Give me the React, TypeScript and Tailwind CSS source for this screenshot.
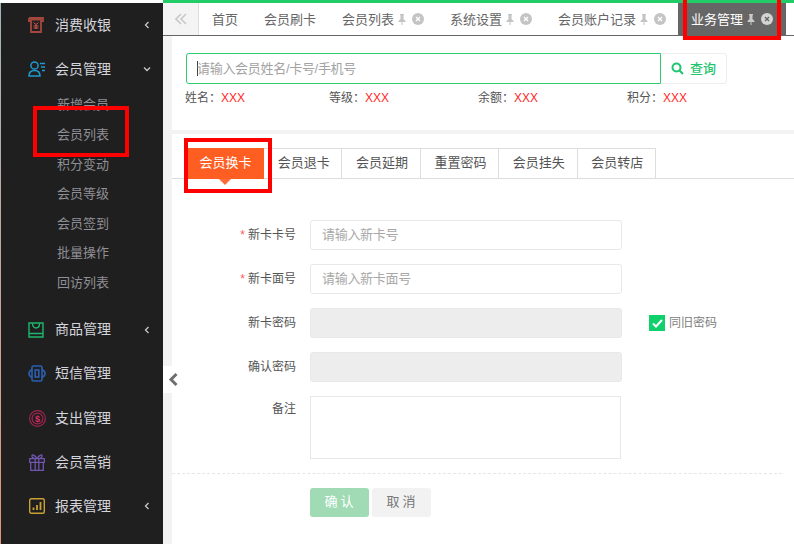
import React from "react";

const zh = "font-['Liberation_Sans','Noto_Sans_CJK_SC',sans-serif]";

type MenuItem = { label: string; icon: React.ReactNode; arrow?: boolean };

const IconCash = () => (
  <svg width="16" height="16" viewBox="0 0 16 16" fill="none" stroke="#a5473f" strokeWidth="1.8">
    <path d="M1 1h14v3h-2M1 1v3h2" />
    <path d="M3 2.500h10v12.500H3z" />
    <path d="M5.500 5.500L8 7.500l2.500-2M8 7.500V12M5.500 9h5M5.500 11h5" stroke="#d2564a" strokeWidth="1" />
  </svg>
);

const IconMember = () => (
  <svg width="18" height="16" viewBox="0 0 18 16" fill="none" stroke="#1f9bd1" strokeWidth="1.5">
    <circle cx="6.500" cy="4.500" r="3.600" />
    <path d="M1 15c0-3.500 2.400-5.500 5.500-5.500S12 11.500 12 15z" />
    <path d="M12 2.500h5M13 6h4M14 9.500h3" />
  </svg>
);

const IconGoods = () => (
  <svg width="16" height="16" viewBox="0 0 16 16" fill="none" stroke="#1fb76c" strokeWidth="1.4">
    <path d="M1 1h14v14H1zM1 11.500h14" />
    <path d="M4.500 1.500c0 6 7 6 7 0" />
  </svg>
);

const IconSms = () => (
  <svg width="18" height="17" viewBox="0 0 18 17" fill="none" stroke="#2a5fb0" strokeWidth="1.6">
    <rect x="4" y="1" width="10" height="15" rx="1.500" />
    <rect x="7.200" y="5" width="3.600" height="7" />
    <path d="M4 4.500c-4 2-4 6 0 8M14 4.500c4 2 4 6 0 8" />
  </svg>
);

const IconExpense = () => (
  <svg width="17" height="17" viewBox="0 0 17 17" fill="none" stroke="#a02450" strokeWidth="1.200" className="ml-px">
    <circle cx="8.500" cy="8.500" r="7.900" />
    <circle cx="8.500" cy="8.500" r="5.400" />
    <text x="8.500" y="11.500" textAnchor="middle" fontSize="9" fontWeight="700" fill="#e02a66" stroke="none">$</text>
  </svg>
);

const IconGift = () => (
  <svg width="16" height="17" viewBox="0 0 16 17" fill="none" stroke="#6f55ad" strokeWidth="1.300" className="ml-px">
    <path d="M.7 4.700h14.600v3.600H.7zM1.700 8.300v8h12.600v-8M6.200 4.700v11.600M9.800 4.700v11.600" />
    <path d="M8 4.500C6 1.500 3.500 .2 3 1.500S4 4.500 5.500 4.500M8 4.500c2-3 4.500-4.300 5-3s-1 3-2.500 3" />
  </svg>
);

const IconReport = () => (
  <svg width="16" height="16" viewBox="0 0 16 16" fill="none" stroke="#c9a032" strokeWidth="1.400" className="ml-px">
    <rect x="0.700" y="0.700" width="14.600" height="14.600" rx="1.500" />
    <path d="M4.500 12v-2.500M8 12V7M11.500 12V4" strokeWidth="1.800" />
  </svg>
);

const Chevron = ({ down }: { down?: boolean }) => (
  <svg width="8" height="8" viewBox="0 0 8 8" fill="none" stroke="#c8c8c8" strokeWidth="1.300" className={down ? "rotate-[-90deg]" : ""}>
    <path d="M5.500 1L2.500 4l3 3" />
  </svg>
);

const Pin = ({ color = "#c4c4c4" }: { color?: string }) => (
  <svg width="8" height="11" viewBox="0 0 8 11" fill={color}>
    <path d="M2 0h4v1l-.5.5V5L7.500 7v1H4.500v3h-1V8H.5V7l2-2V1.500L2 1z" />
  </svg>
);

const CloseDot = ({ bg = "#c4c4c4", fg = "#ffffff" }: { bg?: string; fg?: string }) => (
  <svg width="12" height="12" viewBox="0 0 12 12">
    <circle cx="6" cy="6" r="6" fill={bg} />
    <path d="M4 4l4 4M8 4l-4 4" stroke={fg} strokeWidth="1.400" />
  </svg>
);

const topMenus: MenuItem[] = [
  { label: "商品管理", icon: <IconGoods />, arrow: true },
  { label: "短信管理", icon: <IconSms /> },
  { label: "支出管理", icon: <IconExpense /> },
  { label: "会员营销", icon: <IconGift /> },
  { label: "报表管理", icon: <IconReport />, arrow: true },
];

const subMenus = ["新增会员", "会员列表", "积分变动", "会员等级", "会员签到", "批量操作", "回访列表"];

const MenuRow = ({ label, icon, arrow, down }: MenuItem & { down?: boolean }) => (
  <div className="h-[44.2px] flex items-center text-[14px] text-[#d4d4dc] relative">
    <div className="w-[54px] pl-[27px] flex-none flex items-center">{icon}</div>
    <span>{label}</span>
    {arrow && (
      <span className="absolute left-[142px] top-[18px]">
        <Chevron down={down} />
      </span>
    )}
  </div>
);

const Sidebar = () => (
  <div className="w-[163px] h-full flex-none flex flex-col pt-[3px] bg-white">
    <div className="flex-1 bg-gradient-to-b from-[#9fb4ba] to-[#e2937a] pl-px">
      <div className="h-full bg-[#1f1f1f]">
        <MenuRow label="消费收银" icon={<IconCash />} arrow />
        <MenuRow label="会员管理" icon={<IconMember />} arrow down />
        <div className="flex flex-col -mt-[1px] pb-[10px]">
          {subMenus.map((s) => (
            <div key={s} className="h-[29.6px] flex items-center pl-[56px] text-[13px] text-[#8f8f96]">
              {s}
            </div>
          ))}
        </div>
        {topMenus.map((m) => (
          <MenuRow key={m.label} {...m} />
        ))}
      </div>
    </div>
  </div>
);

const Tab = ({ label, closable, active }: { label: string; closable?: boolean; active?: boolean }) => (
  <div className={`h-full px-[13px] flex items-center text-[13px] flex-none ${active ? "-ml-px bg-[#666666] text-white" : "text-[#666666]"}`}>
    <span className="pt-px">{label}</span>
    {closable && (
      <span className="flex items-center gap-[6px] ml-[4px] w-[26px]">
        <Pin color={active ? "#c9c9c9" : "#c4c4c4"} />
        <CloseDot bg={active ? "#d4d4d4" : "#c4c4c4"} fg={active ? "#666666" : "#ffffff"} />
      </span>
    )}
  </div>
);

const TabBar = () => (
  <div className="h-[33px] flex-none flex border-b border-b-[#666666] bg-white overflow-hidden">
    <div className="w-[36px] flex-none bg-[#f4f4f4] border-r border-r-[#dddddd] flex items-center justify-center">
      <svg width="12" height="12" viewBox="0 0 12 12" fill="none" stroke="#c8c8c8" strokeWidth="1.600">
        <path d="M6 1L1 6l5 5M11 1L6 6l5 5" />
      </svg>
    </div>
    <Tab label="首页" />
    <Tab label="会员刷卡" />
    <Tab label="会员列表" closable />
    <Tab label="系统设置" closable />
    <Tab label="会员账户记录" closable />
    <Tab label="业务管理" closable active />
  </div>
);

const SearchBar = () => (
  <div className="flex h-[31px]">
    <div className="w-[475px] flex items-center pl-[10px] border border-[#2fca72] rounded-l-[3px] text-[13px] tracking-[-0.3px] text-[#a3a3a3]">
      <span className="w-px h-[15px] bg-[#444444] -mr-px" />
      请输入会员姓名/卡号/手机号
    </div>
    <div className="w-[66px] flex items-center justify-center gap-[6px] border border-l-0 border-[#eeeeee] rounded-r-[3px] text-[13px] font-medium text-[#1fc46f]">
      <svg width="13" height="13" viewBox="0 0 13 13" fill="none" stroke="#1fc46f" strokeWidth="2">
        <circle cx="5.500" cy="5.500" r="4" />
        <path d="M8.500 8.500L12 12" />
      </svg>
      查询
    </div>
  </div>
);

const infos = ["姓名：", "等级：", "余额：", "积分："];

const InfoRow = () => (
  <div className="flex mt-[6px] -ml-px text-[12px] leading-[16px] text-[#555555]">
    {infos.map((i) => (
      <div key={i} className="w-[149px] first:w-[144px]">
        {i}
        <span className="text-[#ff2a2a]">XXX</span>
      </div>
    ))}
  </div>
);

const subTabs = ["会员退卡", "会员延期", "重置密码", "会员挂失", "会员转店"];

const BizTabs = () => (
  <div className="h-[37px] flex pl-[15px] relative">
    <div className="absolute left-0 right-0 top-[30px] h-px bg-[#dddddd]" />
    <div className="w-[77px] h-[31px] pb-[2px] bg-[#ff5e23] text-white text-[13px] flex items-center justify-center relative flex-none">
      会员换卡
      <span className="absolute left-[32px] top-[31px] w-0 h-0 border-x-[6px] border-x-transparent border-t-[6px] border-t-[#ff6b35]" />
    </div>
    {subTabs.map((t) => (
      <div key={t} className="w-[78.4px] h-[31px] pb-[2px] pl-[2px] flex-none border border-l-0 border-[#dddddd] text-[13px] text-[#555555] flex items-center justify-center relative">
        {t}
      </div>
    ))}
  </div>
);

const Label = ({ text, required }: { text: string; required?: boolean }) => (
  <div className="w-[138px] flex-none pr-[14px] pb-px text-right text-[12px] text-[#555555]">
    {required && <span className="text-[#ff5a5a] mr-[3px]">*</span>}
    {text}
  </div>
);

const Field = ({ label, required, placeholder, disabled, extra }: { label: string; required?: boolean; placeholder?: string; disabled?: boolean; extra?: React.ReactNode }) => (
  <div className="flex items-center h-[30px] mb-[14px]">
    <Label text={label} required={required} />
    <div className={`w-[312px] h-[30px] flex-none rounded-[3px] border border-[#e8e8e8] pl-[11px] pb-px flex items-center text-[13px] tracking-[-0.3px] text-[#a8a8a8] ${disabled ? "bg-[#ededed]" : "bg-white"}`}>
      {placeholder}
    </div>
    {extra}
  </div>
);

const SamePwd = () => (
  <div className="flex items-center ml-[27px] text-[12px] text-[#808080]">
    <span className="w-4 h-4 bg-[#0fd06a] flex items-center justify-center mr-[4px]">
      <svg width="11" height="9" viewBox="0 0 11 9" fill="none" stroke="white" strokeWidth="2">
        <path d="M1 4.500L4 7.500L10 1" />
      </svg>
    </span>
    同旧密码
  </div>
);

const FormArea = () => (
  <div className="pt-[35px]">
    <Field label="新卡卡号" required placeholder="请输入新卡号" />
    <Field label="新卡面号" required placeholder="请输入新卡面号" />
    <Field label="新卡密码" disabled extra={<SamePwd />} />
    <Field label="确认密码" disabled />
    <div className="flex">
      <div className="pt-[4px]">
        <Label text="备注" />
      </div>
      <div className="w-[311px] h-[63px] border border-[#e8e8e8]" />
    </div>
    <div className="mt-[14px] mr-[12px] border-t border-dashed border-t-[#e6e6e6]" />
    <div className="flex gap-[3px] pl-[138px] pt-[14px]">
      <div className="w-[59px] h-[29px] pl-[2px] pb-px rounded-[3px] bg-[#a0dbb5] text-white text-[13px] tracking-[3px] flex items-center justify-center">确认</div>
      <div className="w-[59px] h-[29px] pl-[2px] pb-px rounded-[3px] bg-[#f2f2f2] text-[#777777] text-[13px] tracking-[3px] flex items-center justify-center">取消</div>
    </div>
  </div>
);

export default function App() {
  return (
    <div className={`w-[794px] h-[544px] relative flex overflow-hidden bg-white ${zh}`}>
      <Sidebar />
      <div className="flex-1 min-w-0 flex flex-col pt-[3px] relative">
        <div className="absolute left-0 right-0 top-0 h-[3px] bg-[#22cc66]" />
        <TabBar />
        <div className="flex-1 pl-[9px] bg-[#f3f3f3]">
          <div className="h-full bg-white flex flex-col">
            <div className="h-[94px] pl-[14px] pt-[17px] flex-none">
              <SearchBar />
              <InfoRow />
            </div>
            <div className="h-[4px] bg-[#f3f3f3] flex-none" />
            <div className="flex-1 pt-[14px]">
              <BizTabs />
              <FormArea />
            </div>
          </div>
        </div>
      </div>

      {/* collapse handle */}
      <div className="absolute left-[163px] top-[366px] w-[9px] h-[27px] bg-white" />
      <svg className="absolute left-[168px] top-[372px]" width="11" height="15" viewBox="0 0 11 15" fill="none" stroke="#6e6e6e" strokeWidth="3">
        <path d="M8.500 2L3 7.500l5.500 5.500" />
      </svg>

      {/* red annotation boxes */}
      <div className="absolute left-[33px] top-[106px] w-[96px] h-[51px] border-4 border-[#ff0000]" />
      <div className="absolute left-[184px] top-[138px] w-[88px] h-[55px] border-4 border-[#ff0000]" />
      <div className="absolute left-[683px] -top-[4px] w-[98px] h-[44px] border-4 border-[#ff0000]" />
    </div>
  );
}
